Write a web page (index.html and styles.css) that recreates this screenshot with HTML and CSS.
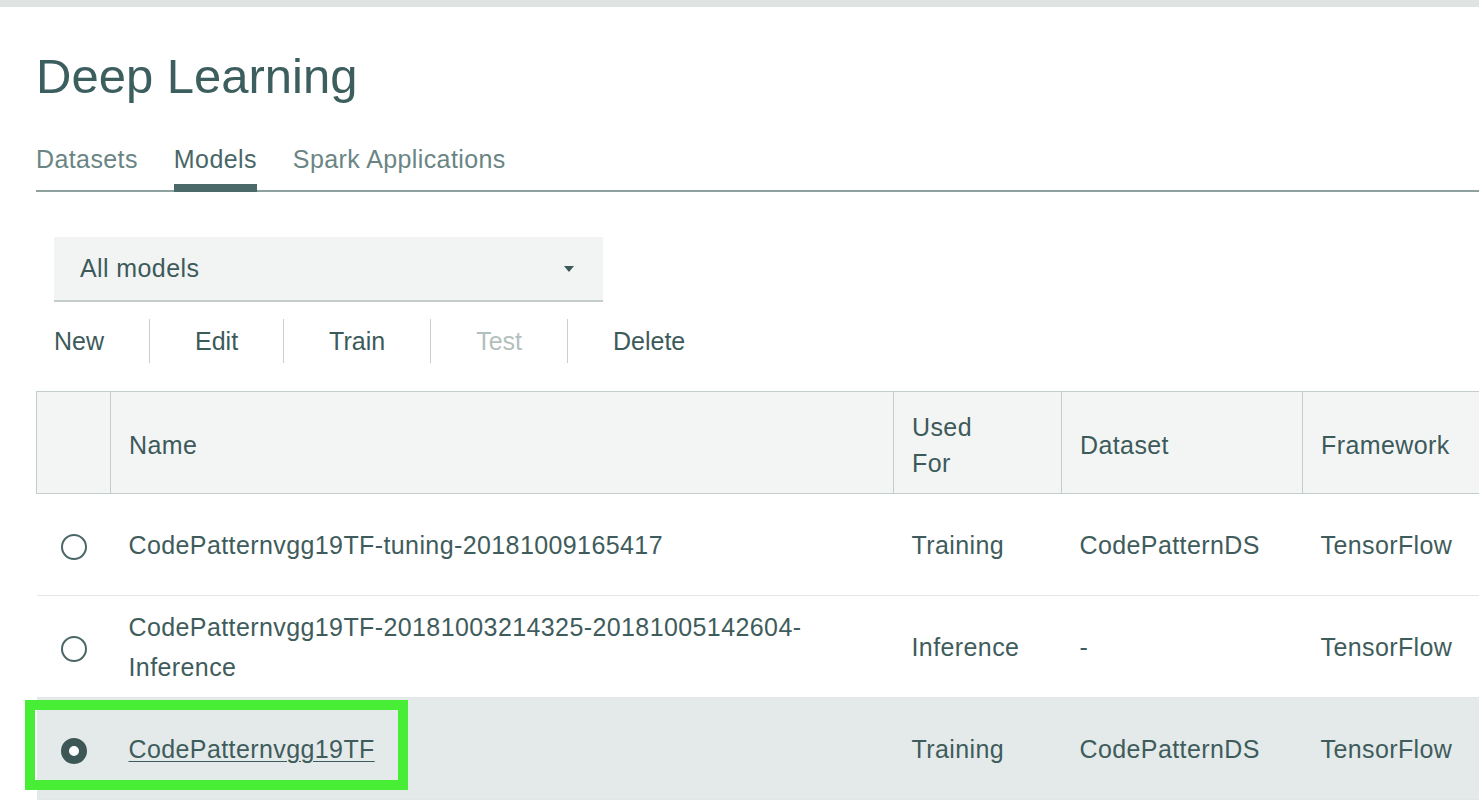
FILE: index.html
```html
<!DOCTYPE html>
<html lang="en">
<head>
<meta charset="utf-8">
<title>Deep Learning - Models</title>
<link rel="stylesheet" href="styles.css">
</head>
<body>
<div class="topbar"></div>
<main class="page">
  <h1 class="title">Deep Learning</h1>
  <nav class="tabs">
    <a class="tab">Datasets</a>
    <a class="tab active">Models</a>
    <a class="tab">Spark Applications</a>
  </nav>

  <div class="select">
    <span>All models</span>
    <span class="caret"></span>
  </div>

  <div class="toolbar">
    <button class="btn">New</button>
    <button class="btn">Edit</button>
    <button class="btn">Train</button>
    <button class="btn disabled">Test</button>
    <button class="btn">Delete</button>
  </div>

  <div class="table-wrap">
    <table class="grid">
      <colgroup>
        <col class="c-sel">
        <col class="c-name">
        <col class="c-used">
        <col class="c-ds">
        <col class="c-fw">
      </colgroup>
      <thead>
        <tr>
          <th></th>
          <th>Name</th>
          <th>Used<br>For</th>
          <th>Dataset</th>
          <th>Framework</th>
        </tr>
      </thead>
      <tbody>
        <tr>
          <td class="sel"><span class="radio"></span></td>
          <td>CodePatternvgg19TF-tuning-20181009165417</td>
          <td>Training</td>
          <td>CodePatternDS</td>
          <td>TensorFlow</td>
        </tr>
        <tr>
          <td class="sel"><span class="radio"></span></td>
          <td class="two">CodePatternvgg19TF-20181003214325-20181005142604-<br>Inference</td>
          <td>Inference</td>
          <td>-</td>
          <td>TensorFlow</td>
        </tr>
        <tr class="selected">
          <td class="sel"><span class="radio on"></span></td>
          <td><a class="link">CodePatternvgg19TF</a></td>
          <td>Training</td>
          <td>CodePatternDS</td>
          <td>TensorFlow</td>
        </tr>
      </tbody>
    </table>
    <div class="highlight-box"></div>
  </div>
</main>
</body>
</html>
```

FILE: styles.css
```css
html, body {
  margin: 0;
  padding: 0;
  background: #ffffff;
  overflow: hidden;
}

body {
  font-family: "Liberation Sans", Arial, Helvetica, sans-serif;
  color: #3d5a5a;
  width: 1479px;
  height: 812px;
}

.topbar {
  height: 7px;
  background: #dfe3e2;
}

.page {
  padding-left: 36px;
  width: 1600px;
}

.title {
  margin: 41px 0 0 0;
  font-size: 49px;
  line-height: 56px;
  font-weight: normal;
  color: #3d5e5e;
}

.tabs {
  margin-top: 40px;
  display: flex;
  gap: 36px;
  border-bottom: 2px solid #8da29f;
}

.tab {
  font-size: 25px;
  line-height: 30px;
  letter-spacing: 0.4px;
  color: #6a8584;
  padding-bottom: 10px;
  border-bottom: 8px solid transparent;
  margin-bottom: -2px;
}

.tab.active {
  color: #4a6767;
  border-bottom-color: #4b6969;
}

.select {
  margin: 45px 0 0 18px;
  width: 549px;
  height: 63px;
  background: #f2f4f4;
  border-bottom: 2px solid #c3cdcb;
  display: flex;
  align-items: center;
  justify-content: space-between;
  font-size: 25px;
  letter-spacing: 0.4px;
  color: #3d5a5a;
}

.select span:first-child {
  margin-left: 26px;
}

.caret {
  width: 0;
  height: 0;
  border-left: 5px solid transparent;
  border-right: 5px solid transparent;
  border-top: 6px solid #3d5858;
  margin-right: 29px;
}

.toolbar {
  margin: 17px 0 0 18px;
  display: flex;
  height: 44px;
}

.btn {
  font-family: inherit;
  font-size: 25px;
  color: #3d5a5a;
  background: none;
  border: none;
  border-left: 1px solid #c6d0ce;
  padding: 0 45px;
  height: 44px;
  line-height: 44px;
  margin: 0;
}

.btn:first-child {
  border-left: none;
  padding-left: 0;
}

.btn.disabled {
  color: #b3bfbd;
}

.table-wrap {
  position: relative;
  margin-top: 28px;
}

.grid {
  border-collapse: collapse;
  table-layout: fixed;
  width: 1466px;
  font-size: 25px;
  letter-spacing: 0.4px;
}

.c-sel { width: 74px; }
.c-name { width: 783px; }
.c-used { width: 168px; }
.c-ds { width: 241px; }
.c-fw { width: 200px; }

.grid th {
  background: #f3f5f5;
  border: 1px solid #c3cecc;
  height: 97px;
  text-align: left;
  font-weight: normal;
  padding: 4px 18px 0;
  line-height: 36px;
  color: #3d5a5a;
}

.grid td {
  height: 101px;
  padding: 0 18px;
  border-bottom: 1px solid #e1e7e6;
  line-height: 40px;
  color: #3f5c5c;
  white-space: nowrap;
}

.grid td.two {
  white-space: normal;
}

.grid td.sel {
  padding: 0;
  text-align: center;
}

.selected td {
  background: #e4eaea;
}

.radio {
  display: inline-block;
  width: 26px;
  height: 26px;
  box-sizing: border-box;
  border: 2px solid #4b6666;
  border-radius: 50%;
  vertical-align: middle;
  background: #ffffff;
}

.radio.on {
  border: 8px solid #3d5757;
  background: #ffffff;
}

.link {
  color: #3f5c5c;
  text-decoration: underline;
  text-underline-offset: 3px;
  text-decoration-thickness: 1px;
}

.highlight-box {
  position: absolute;
  left: -11px;
  top: 309px;
  width: 383px;
  height: 90px;
  box-sizing: border-box;
  border: 10px solid #48ee36;
  pointer-events: none;
}
```
